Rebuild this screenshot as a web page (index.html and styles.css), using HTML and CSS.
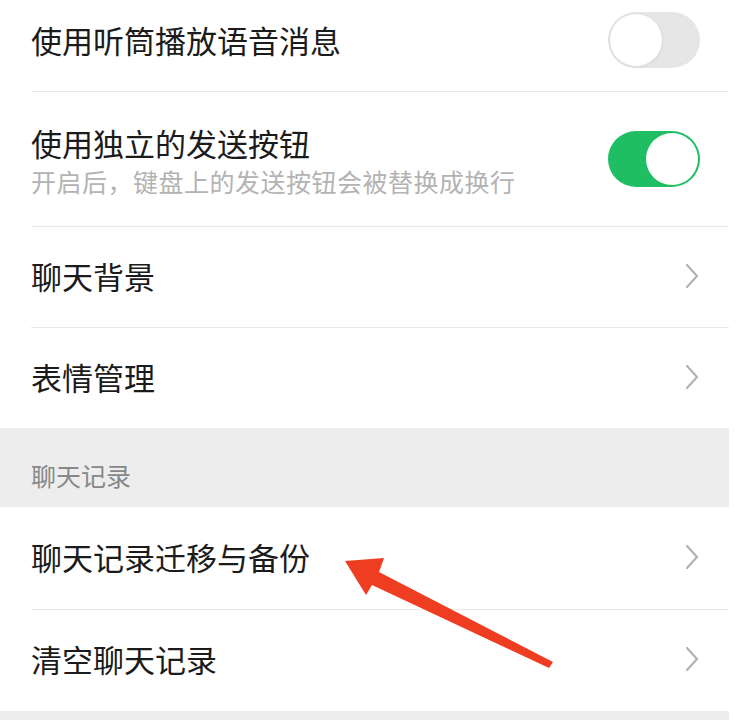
FILE: index.html
```html
<!DOCTYPE html>
<html lang="zh-CN">
<head>
<meta charset="utf-8">
<title>聊天设置</title>
<link rel="stylesheet" href="styles.css">
</head>
<body>
<div class="page">
  <div class="group">
    <div class="cell cell-first">
      <div class="cell-body">
        <div class="cell-text">
          <div class="title">使用听筒播放语音消息</div>
        </div>
        <div class="switch"></div>
      </div>
    </div>
    <div class="cell cell-double">
      <div class="cell-body">
        <div class="cell-text cell-text-double">
          <div class="title">使用独立的发送按钮</div>
          <div class="desc">开启后，键盘上的发送按钮会被替换成换行</div>
        </div>
        <div class="switch switch-on"></div>
      </div>
    </div>
    <div class="cell">
      <div class="cell-body">
        <div class="cell-text"><div class="title">聊天背景</div></div>
        <svg class="chevron" viewBox="0 0 14 26" width="14" height="26"><polyline points="2,2 12,13 2,24" fill="none" stroke="#b3b3b3" stroke-width="2.2" stroke-linecap="round" stroke-linejoin="round"/></svg>
      </div>
    </div>
    <div class="cell cell-last">
      <div class="cell-body">
        <div class="cell-text"><div class="title">表情管理</div></div>
        <svg class="chevron" viewBox="0 0 14 26" width="14" height="26"><polyline points="2,2 12,13 2,24" fill="none" stroke="#b3b3b3" stroke-width="2.2" stroke-linecap="round" stroke-linejoin="round"/></svg>
      </div>
    </div>
  </div>
  <div class="section-head">聊天记录</div>
  <div class="group">
    <div class="cell cell-tall">
      <div class="cell-body">
        <div class="cell-text"><div class="title">聊天记录迁移与备份</div></div>
        <svg class="chevron" viewBox="0 0 14 26" width="14" height="26"><polyline points="2,2 12,13 2,24" fill="none" stroke="#b3b3b3" stroke-width="2.2" stroke-linecap="round" stroke-linejoin="round"/></svg>
      </div>
    </div>
    <div class="cell cell-last cell-end">
      <div class="cell-body">
        <div class="cell-text"><div class="title">清空聊天记录</div></div>
        <svg class="chevron" viewBox="0 0 14 26" width="14" height="26"><polyline points="2,2 12,13 2,24" fill="none" stroke="#b3b3b3" stroke-width="2.2" stroke-linecap="round" stroke-linejoin="round"/></svg>
      </div>
    </div>
  </div>
  <div class="section-foot"></div>
  <svg class="arrow" viewBox="0 0 240 140" width="240" height="140">
    <polygon points="15,21 54,18 49,32 223,122 219,128 42,45 36,55" fill="#ef3d22"/>
  </svg>
</div>
</body>
</html>
```
FILE: styles.css
```css
html, body {
  margin: 0;
  padding: 0;
  background: #ffffff;
}
body {
  font-family: "Noto Sans CJK SC", "Noto Sans", sans-serif;
  color: #1b1b1b;
}
.page {
  position: relative;
  width: 741px;
  height: 720px;
  overflow: hidden;
  background: #ffffff;
}
.group {
  width: 729px;
  background: #ffffff;
}
.cell {
  padding-left: 31px;
}
.cell-body {
  display: flex;
  align-items: center;
  padding-right: 29px;
  border-bottom: 1px solid #e8e8e8;
  box-sizing: content-box;
  padding-bottom: 3px;
  height: 97px;
}
.cell-first .cell-body {
  height: 80px;
  padding-bottom: 11px;
}
.cell-double .cell-body {
  height: 134px;
  padding-bottom: 0;
}
.cell-tall .cell-body {
  height: 99px;
}
.cell-last .cell-body {
  border-bottom: none;
}
.cell-end .cell-body {
  height: 98px;
}
.cell-text {
  flex: 1;
  min-width: 0;
}
.cell-text-double {
  padding-top: 2px;
}
.title {
  font-size: 31px;
  line-height: 36px;
  color: #1b1b1b;
}
.desc {
  margin-top: 5px;
  font-size: 25px;
  line-height: 30px;
  letter-spacing: 0.5px;
  color: #b3b3b3;
}
.switch {
  position: relative;
  flex: none;
  width: 92px;
  height: 56px;
  border-radius: 28px;
  background: #e6e6e6;
  box-sizing: border-box;
}
.switch::after {
  content: "";
  position: absolute;
  left: 1px;
  top: 1px;
  width: 54px;
  height: 54px;
  border-radius: 50%;
  background: #ffffff;
  box-sizing: border-box;
  border: 1px solid #dedede;
  box-shadow: 0 1px 2px rgba(0, 0, 0, 0.06);
}
.switch-on {
  background: #1fbe63;
}
.switch-on::after {
  left: auto;
  right: 2px;
  top: 2px;
  width: 52px;
  height: 52px;
  border: none;
  box-shadow: none;
}
.chevron {
  flex: none;
  display: block;
  margin-right: 1px;
}
.section-head {
  width: 729px;
  height: 79px;
  box-sizing: border-box;
  padding-top: 32px;
  padding-left: 31px;
  background: #ededed;
  font-size: 25px;
  line-height: 30px;
  color: #888888;
}
.section-foot {
  width: 729px;
  height: 9px;
  background: #ededed;
}
.arrow {
  position: absolute;
  left: 330px;
  top: 540px;
  display: block;
}
```
